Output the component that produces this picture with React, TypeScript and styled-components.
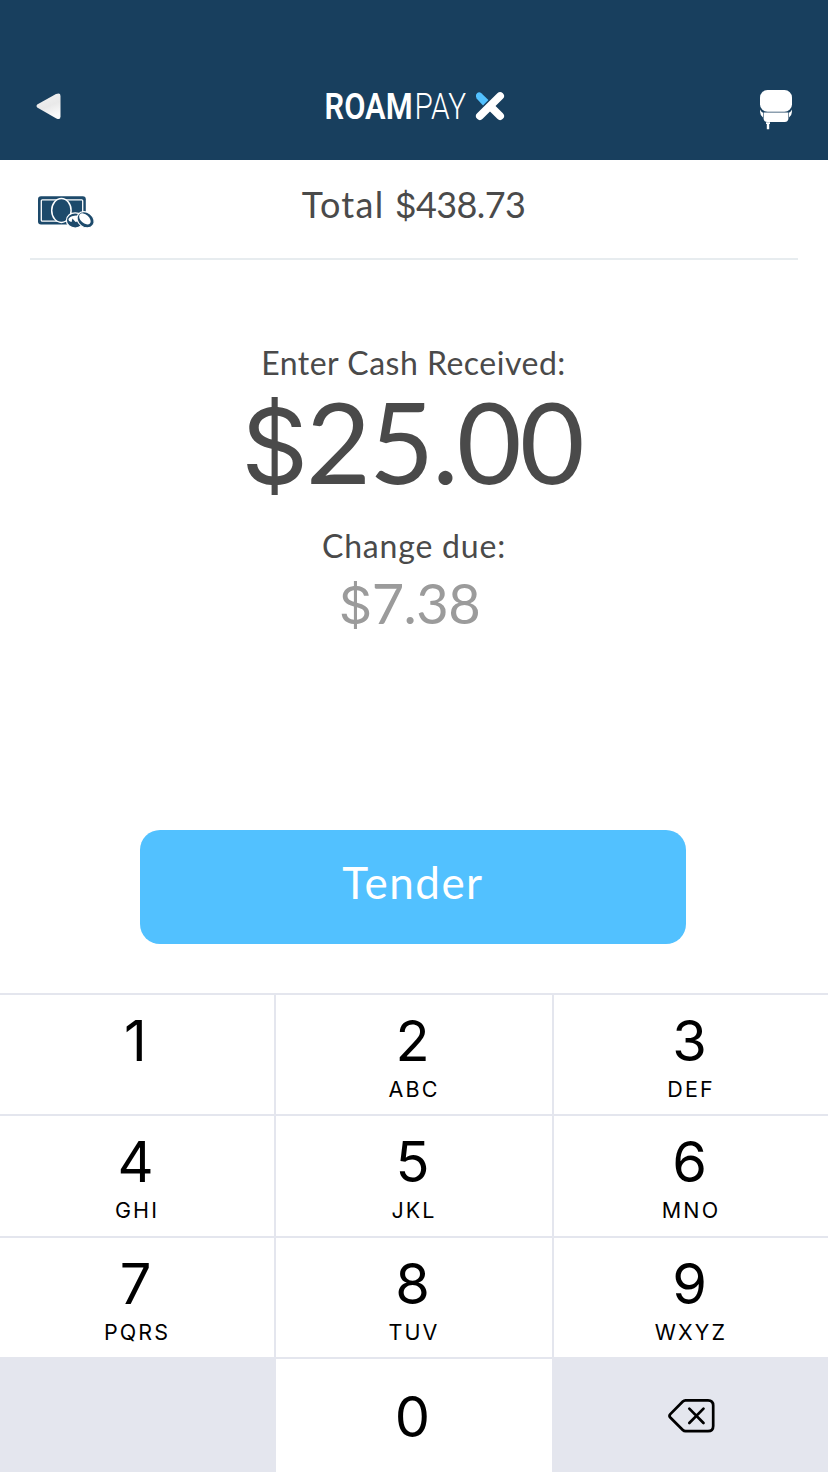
import React from "react";
import styled, { createGlobalStyle } from "styled-components";

const GlobalStyle = createGlobalStyle`
  * { box-sizing: border-box; }
  body { margin: 0; background: #fff; }
`;

const Screen = styled.main`
  width: 828px;
  height: 1472px;
  display: flex;
  flex-direction: column;
  background: #fff;
  overflow: hidden;
  font-family: Lato, "Open Sans", sans-serif;
  color: #4a4a4a;
`;

const Header = styled.header`
  height: 160px;
  flex: none;
  padding: 84px 32px 24px;
  display: grid;
  grid-template-columns: 64px 1fr 64px;
  align-items: start;
  background: #183f5e;
`;

const HeaderButton = styled.button<{ $end?: boolean }>`
  display: flex;
  justify-content: ${(p) => (p.$end ? "flex-end" : "flex-start")};
  padding: 0;
  border: 0;
  background: none;
`;

const Logo = styled.svg`
  justify-self: center;
  display: block;
`;

const TotalBar = styled.section`
  height: 100px;
  flex: none;
  margin: 0 30px;
  padding: 0 8px;
  display: grid;
  grid-template-columns: 64px 1fr 64px;
  border-bottom: 2px solid #e7ecef;
`;

const CashIcon = styled.svg`
  display: block;
  margin-top: 34px;
`;

const Line = styled.div<{ $size: number; $height: number; $spacing?: number; $muted?: boolean; $shift?: number }>`
  font-size: ${(p) => p.$size}px;
  line-height: ${(p) => p.$height}px;
  letter-spacing: ${(p) => p.$spacing ?? 0}px;
  padding-right: ${(p) => p.$shift ?? 0}px;
  color: ${(p) => (p.$muted ? "#9b9b9b" : "#4a4a4a")};
  text-align: center;
  white-space: nowrap;
`;

const Currency = styled.span`
  font-family: Inter, "Liberation Sans", sans-serif;
  font-weight: 400;
  font-size: 0.93em;
  line-height: 1;
`;

const Figure = styled.span`
  letter-spacing: -0.6px;
`;

const Amounts = styled.section`
  height: 570px;
  flex: none;
  padding-top: 82px;
`;

const Change = styled.div`
  padding-top: 29px;
`;

const TenderButton = styled.button`
  flex: none;
  width: 546px;
  height: 114px;
  margin: 0 0 49px 140px;
  padding: 0 0 10px;
  border: 0;
  border-radius: 20px;
  background: #52c1ff;
  color: #fff;
  font: 400 44px/104px Lato, "Open Sans", sans-serif;
  letter-spacing: 1.5px;
`;

const Keypad = styled.section`
  flex: 1;
  display: grid;
  grid-template-columns: 274px 276px 274px;
  grid-template-rows: 119.33px 119.33px 119.33px 1fr;
  gap: 2px;
  padding-top: 2px;
  background: #e4e6ee;
  font-family: Inter, "Liberation Sans", sans-serif;
  color: #000;
`;

const Key = styled.button<{ $blank?: boolean; $single?: boolean }>`
  display: flex;
  flex-direction: column;
  align-items: center;
  padding: ${(p) => (p.$single ? "29px" : "17px")} 3px 0 0;
  border: 0;
  background: ${(p) => (p.$blank ? "transparent" : "#fff")};
  color: inherit;
  font-family: inherit;
`;

const Digit = styled.span`
  font-size: 56px;
  line-height: 58px;
`;

const Letters = styled.span`
  font-size: 21.5px;
  line-height: 38px;
  letter-spacing: 2.1px;
  margin-right: -3px;
`;

const DeleteIcon = styled.svg`
  display: block;
  margin: 9px -2px 0 0;
`;

const keys: [string, string][] = [
  ["1", ""],
  ["2", "ABC"],
  ["3", "DEF"],
  ["4", "GHI"],
  ["5", "JKL"],
  ["6", "MNO"],
  ["7", "PQRS"],
  ["8", "TUV"],
  ["9", "WXYZ"],
];

export default function App() {
  return (
    <>
      <GlobalStyle />
      <Screen>
        <Header>
          <HeaderButton aria-label="Back">
            <svg width="40" height="44" viewBox="32 84 40 44">
              <defs>
                <linearGradient id="arrow" x1="0" y1="0" x2="0.4" y2="1">
                  <stop offset="0" stopColor="#f4f4f4" />
                  <stop offset="0.6" stopColor="#e9e9e9" />
                  <stop offset="1" stopColor="#fafafa" />
                </linearGradient>
              </defs>
              <path d="M37.2 104.6 L56 94.1 Q60.5 92.3 60.5 96 V116.5 Q60.5 120.3 56.4 118.4 L37.2 107.4 Q35.6 106 37.2 104.6Z" fill="url(#arrow)" />
            </svg>
          </HeaderButton>
          <Logo width="184" height="44" viewBox="322 84 184 44" fontFamily="Roboto, sans-serif" fontSize="36.5" fill="#fff">
            <text x="324.6" y="119" fontWeight="600" textLength="88" lengthAdjust="spacingAndGlyphs">ROAM</text>
            <text x="414.6" y="119" fontWeight="300" textLength="51.4" lengthAdjust="spacingAndGlyphs">PAY</text>
            <path d="M476 96.6 Q475.4 94.6 477.2 92.9 Q479.4 91.6 481.4 93.2 L488.4 100 L483 105.4 L476.6 98.4Z" fill="#52c1ff" />
            <path d="M479.9 116.1 L500.1 96.1" stroke="#fff" strokeWidth="7.8" strokeLinecap="round" />
            <path d="M491 107 L500.1 116.1" stroke="#fff" strokeWidth="7.8" strokeLinecap="round" />
          </Logo>
          <HeaderButton $end aria-label="Card reader">
            <svg width="40" height="48" viewBox="756 84 40 48" fill="#fff">
              <rect x="760" y="90" width="32" height="21.8" rx="7.5" />
              <path d="M760.1 109.6 Q761 112 763 112.7 V117.4 Q760.1 115.4 760.1 112Z M791.9 109.6 Q791 112 789 112.7 V117.4 Q791.9 115.4 791.9 112Z" />
              <path d="M763.6 112.5 H788.4 V118.2 Q788.4 121.9 784.7 121.9 H767.3 Q763.6 121.9 763.6 118.2Z" />
              <path d="M766 122.3 H770 V124 H769.2 V129.3 H766.8 V124 H766Z" />
            </svg>
          </HeaderButton>
        </Header>

        <TotalBar>
          <CashIcon width="60" height="36" viewBox="38 194 60 36">
            <rect x="38" y="196.2" width="47.8" height="28.4" rx="3" fill="#1d4a6b" />
            <rect x="41.3" y="199.8" width="41.4" height="21.4" rx="1" fill="none" stroke="#fff" strokeWidth="1.3" />
            <ellipse cx="61.4" cy="210.4" rx="9.7" ry="12" fill="#1d4a6b" stroke="#fff" strokeWidth="1.5" />
            <ellipse cx="75.2" cy="220.4" rx="8.8" ry="7.6" fill="#1d4a6b" stroke="#fff" strokeWidth="1.2" />
            <ellipse cx="74.8" cy="218.8" rx="6.4" ry="3.2" transform="rotate(-8 74.8 218.8)" fill="#fff" />
            <path d="M71.5 222.4 L72.4 218.6 L76 222.4Z" fill="#1d4a6b" />
            <ellipse cx="85.6" cy="219.8" rx="9.2" ry="7.4" transform="rotate(38 85.6 219.8)" fill="#1d4a6b" stroke="#fff" strokeWidth="1.2" />
            <ellipse cx="84.9" cy="218.9" rx="6.8" ry="4.2" transform="rotate(42 84.9 218.9)" fill="#fff" />
          </CashIcon>
          <Line $size={36} $height={89} $spacing={1.3} $shift={1}>
            Total <Figure><Currency>$</Currency>438.73</Figure>
          </Line>
        </TotalBar>

        <Amounts>
          <Line $size={32} $height={42} $spacing={0.5} $shift={1}>Enter Cash Received:</Line>
          <Line $size={112} $height={114} $spacing={-1.9} $shift={4}>
            <Currency>$</Currency>25.00
          </Line>
          <Change>
            <Line $size={32} $height={38} $spacing={0.8}>Change due:</Line>
            <Line $size={56} $height={76} $spacing={-0.5} $shift={9} $muted>
              <Currency>$</Currency>7.38
            </Line>
          </Change>
        </Amounts>

        <TenderButton>Tender</TenderButton>

        <Keypad>
          {keys.map(([digit, letters]) => (
            <Key key={digit}>
              <Digit>{digit}</Digit>
              <Letters>{letters}</Letters>
            </Key>
          ))}
          <Key $blank aria-label="Blank" />
          <Key $single>
            <Digit>0</Digit>
          </Key>
          <Key $blank $single aria-label="Delete">
            <DeleteIcon width="50" height="38" viewBox="666 1397 50 38" fill="none" stroke="#000" strokeWidth="2.7" strokeLinecap="round" strokeLinejoin="round">
              <path d="M685.5 1400.3 H708 Q713.2 1400.3 713.2 1405.5 V1426 Q713.2 1431.2 708 1431.2 H685.5 Q684 1431.2 682.8 1430 L670.3 1417.5 Q668.7 1415.8 670.3 1414.1 L682.8 1401.5 Q684 1400.3 685.5 1400.3Z" />
              <path d="M689.3 1408.6 L703.5 1423 M703.5 1408.6 L689.3 1423" />
            </DeleteIcon>
          </Key>
        </Keypad>
      </Screen>
    </>
  );
}
